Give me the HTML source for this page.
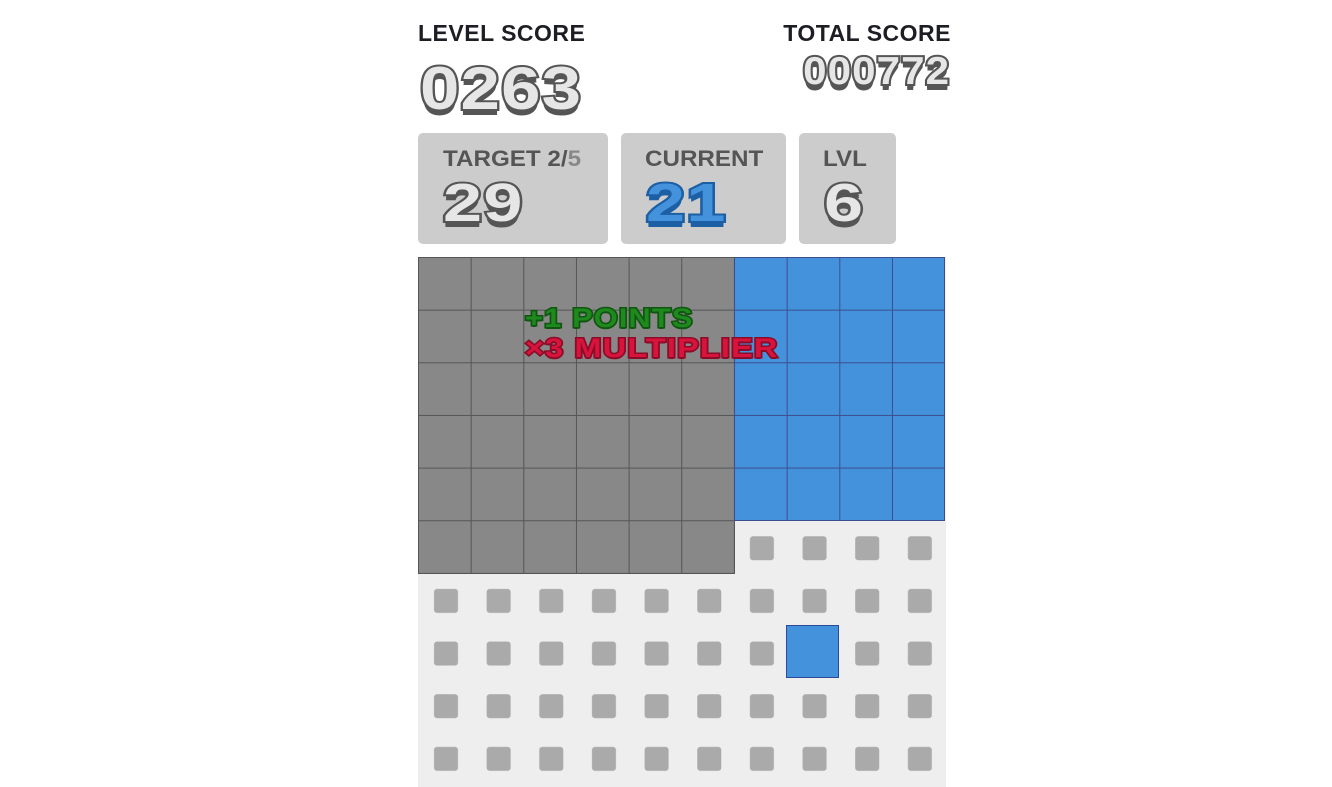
<!DOCTYPE html>
<html><head><meta charset="utf-8"><style>
body{margin:0;width:1332px;height:787px;background:#fff;overflow:hidden;position:relative;font-family:"Liberation Sans",sans-serif;font-weight:bold}
.a{position:absolute}
.h{font-size:23px;color:#1d1d24;letter-spacing:0.5px;top:20px;font-weight:900}
.num{color:#e6e6e6;-webkit-text-stroke:4px #555;paint-order:stroke fill;text-shadow:0 4px 0 #555,0 6px 0 #555;font-weight:900;letter-spacing:1px;transform-origin:0 0}
.panel{background:#cccccc;border-radius:5px;top:133px;height:111px}
.lab{font-size:22px;color:#555;position:absolute;top:13px;transform:scaleX(1.1);transform-origin:0 0;font-weight:900}
.pn{font-size:54px;position:absolute;top:39px;transform:scaleX(1.3)}
.ov{font-size:27px;letter-spacing:1px;transform-origin:0 0;paint-order:stroke fill}
</style></head><body>
<div class="a h" style="left:418px">LEVEL SCORE</div>
<div class="a h" style="right:381px">TOTAL SCORE</div>
<div class="a num" style="left:420px;top:54px;font-size:60px;transform:scaleX(1.18)">0263</div>
<div class="a num" style="right:382px;top:50px;font-size:39px;transform:scaleX(1.08);transform-origin:100% 0">000772</div>

<div class="a panel" style="left:418px;width:190px"><div class="lab" style="left:25px">TARGET 2/<span style="color:#888">5</span></div><div class="pn num" style="left:25px">29</div></div>
<div class="a panel" style="left:621px;width:165px"><div class="lab" style="left:24px">CURRENT</div><div class="pn num" style="left:25px;color:#4592dc;-webkit-text-stroke:4px #1c5fa5;text-shadow:0 4px 0 #1c5fa5,0 6px 0 #1c5fa5">21</div></div>
<div class="a panel" style="left:799px;width:97px"><div class="lab" style="left:24px">LVL</div><div class="pn num" style="left:25px">6</div></div>

<svg class="a" style="left:418px;top:257px" width="528" height="530">
<defs>
<pattern id="d" width="52.65" height="52.65" patternUnits="userSpaceOnUse"><rect x="16" y="16" width="24" height="24" rx="3" fill="#aaa"/></pattern>
<pattern id="g" width="52.65" height="52.65" patternUnits="userSpaceOnUse"><rect x="0.5" y="0.5" width="52.65" height="52.65" fill="none" stroke="#555" stroke-width="1"/></pattern>
<pattern id="b" x="0" width="52.65" height="52.65" patternUnits="userSpaceOnUse"><rect x="0.5" y="0.5" width="52.65" height="52.65" fill="none" stroke="#3d4e8e" stroke-width="1"/></pattern>
</defs>
<rect width="528" height="530" fill="#eeeeee"/>
<rect width="528" height="530" fill="url(#d)"/>
<rect x="0" y="0" width="316" height="316" fill="#888"/>
<rect x="0" y="0" width="316" height="316" fill="url(#g)"/>
<rect x="0.5" y="0.5" width="316" height="316" fill="none" stroke="#555"/>
<g transform="translate(316,0)">
<rect width="211" height="263" fill="#4592dc"/>
<rect width="211" height="263" fill="url(#b)"/>
<rect x="0.5" y="0.5" width="210" height="263" fill="none" stroke="#3d4e8e"/>
</g>
<rect x="368.5" y="368.5" width="52" height="52" fill="#4592dc" stroke="#2c4a9a"/>
</svg>

<div class="a ov" style="left:525px;top:303px;color:#1e8a1e;-webkit-text-stroke:3px #105510;text-shadow:0 2px 0 #105510;transform:scaleX(1.14)">+1 POINTS</div>
<div class="a ov" style="left:525px;top:333px;color:#d8143c;-webkit-text-stroke:3px #8a0c28;text-shadow:0 2px 0 #8a0c28;transform:scaleX(1.2)">×3 MULTIPLIER</div>
</body></html>
